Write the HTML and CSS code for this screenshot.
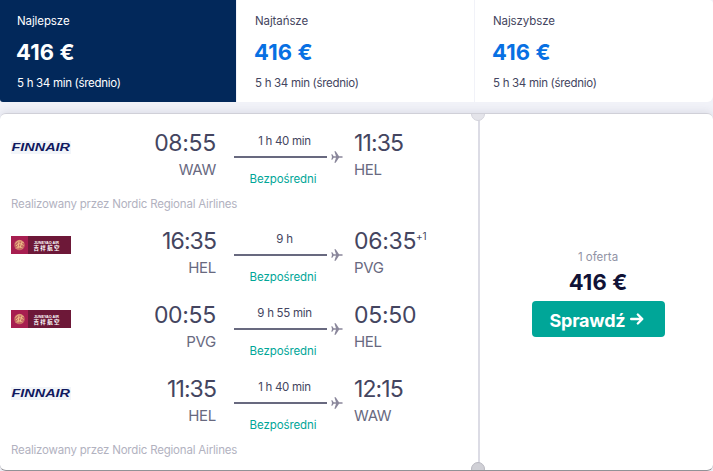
FILE: index.html
```html
<!DOCTYPE html>
<html lang="pl">
<head>
    <meta charset="UTF-8">
    <meta name="viewport" content="width=device-width, initial-scale=1.0">
    <title>Loty</title>
    <link rel="stylesheet" href="styles.css">
</head>
<body>
    <svg class="defs" width="0" height="0">
        <symbol id="plane" viewBox="0 0 12 12">
            <path d="M0.3 3.2h1L2.7 5.2H5L3.4 0.3h1.3L8 5.2h2.6c.7 0 1.2.4 1.2.8s-.5.8-1.2.8H8L4.700 11.700H3.400L5 6.800H2.700L1.300 8.800h-1L1 6z"/>
        </symbol>
        <symbol id="juneyao" viewBox="0 0 60 18">
            <rect width="60" height="18" fill="#6d1838"/>
            <rect width="17" height="18" fill="#a71e50"/>
            <circle cx="8.5" cy="9" r="5.3" fill="#c66a62"/>
            <path d="M4.500 7.500c2-3.500 6-3.500 8-.5M5 10c2-3 5-3 7.500-.5M5 12.500c2-2.500 4-2 6.500-.5M8 5.500l-1 7M11 6l-2 6" fill="none" stroke="#efc088" stroke-width="1"/>
        </symbol>
    </svg>

    <div class="tabs">
        <div class="tab active">
            <div class="tab-title">Najlepsze</div>
            <div class="tab-price">416 €</div>
            <div class="tab-time">5 h 34 min (średnio)</div>
        </div>
        <div class="tab">
            <div class="tab-title">Najtańsze</div>
            <div class="tab-price">416 €</div>
            <div class="tab-time">5 h 34 min (średnio)</div>
        </div>
        <div class="tab">
            <div class="tab-title">Najszybsze</div>
            <div class="tab-price">416 €</div>
            <div class="tab-time">5 h 34 min (średnio)</div>
        </div>
    </div>

    <div class="ticket">
        <div class="legs">
            <div class="leg">
                <svg class="logo finnair" viewBox="0 0 60 13">
                    <text class="finnair-name" x="0.500" y="10.300" textLength="58.500" lengthAdjust="spacingAndGlyphs">FINNAIR</text>
                </svg>
                <div class="depart">
                    <div class="time">08:55</div>
                    <div class="code">WAW</div>
                </div>
                <div class="stops">
                    <div class="duration">1 h 40 min</div>
                    <div class="route"><span class="line"></span><svg class="plane"><use href="#plane"/></svg></div>
                    <div class="direct">Bezpośredni</div>
                </div>
                <div class="arrive">
                    <div class="time narrow">11:35</div>
                    <div class="code">HEL</div>
                </div>
            </div>
            <div class="operator">Realizowany przez Nordic Regional Airlines</div>

            <div class="leg">
                <svg class="logo" viewBox="0 0 60 18">
                    <use href="#juneyao"/>
                    <text class="juneyao-en" x="23" y="7.800" textLength="25" lengthAdjust="spacingAndGlyphs">JUNEYAO AIR</text>
                    <text class="juneyao-cn" x="22.500" y="14" textLength="26" lengthAdjust="spacing">吉祥航空</text>
                </svg>
                <div class="depart">
                    <div class="time narrow">16:35</div>
                    <div class="code">HEL</div>
                </div>
                <div class="stops">
                    <div class="duration">9 h</div>
                    <div class="route"><span class="line"></span><svg class="plane"><use href="#plane"/></svg></div>
                    <div class="direct">Bezpośredni</div>
                </div>
                <div class="arrive">
                    <div class="time">06:35<span class="next-day">+1</span></div>
                    <div class="code">PVG</div>
                </div>
            </div>

            <div class="leg">
                <svg class="logo" viewBox="0 0 60 18">
                    <use href="#juneyao"/>
                    <text class="juneyao-en" x="23" y="7.800" textLength="25" lengthAdjust="spacingAndGlyphs">JUNEYAO AIR</text>
                    <text class="juneyao-cn" x="22.500" y="14" textLength="26" lengthAdjust="spacing">吉祥航空</text>
                </svg>
                <div class="depart">
                    <div class="time">00:55</div>
                    <div class="code">PVG</div>
                </div>
                <div class="stops">
                    <div class="duration">9 h 55 min</div>
                    <div class="route"><span class="line"></span><svg class="plane"><use href="#plane"/></svg></div>
                    <div class="direct">Bezpośredni</div>
                </div>
                <div class="arrive">
                    <div class="time">05:50</div>
                    <div class="code">HEL</div>
                </div>
            </div>

            <div class="leg">
                <svg class="logo finnair" viewBox="0 0 60 13">
                    <text class="finnair-name" x="0.500" y="10.300" textLength="58.500" lengthAdjust="spacingAndGlyphs">FINNAIR</text>
                </svg>
                <div class="depart">
                    <div class="time narrow">11:35</div>
                    <div class="code">HEL</div>
                </div>
                <div class="stops">
                    <div class="duration">1 h 40 min</div>
                    <div class="route"><span class="line"></span><svg class="plane"><use href="#plane"/></svg></div>
                    <div class="direct">Bezpośredni</div>
                </div>
                <div class="arrive">
                    <div class="time narrow">12:15</div>
                    <div class="code">WAW</div>
                </div>
            </div>
            <div class="operator">Realizowany przez Nordic Regional Airlines</div>
        </div>

        <div class="offer">
            <div class="offer-count">1 oferta</div>
            <div class="offer-price">416 €</div>
            <button class="button">Sprawdź
                <svg class="arrow" viewBox="0 0 14 14"><path d="M1.200 7H12M7.800 2.500L12.300 7l-4.500 4.500"/></svg>
            </button>
        </div>
    </div>
</body>
</html>
```

FILE: styles.css
```css
* {
    box-sizing: border-box;
    margin: 0;
    padding: 0;
}

body {
    width: 713px;
    height: 471px;
    overflow: hidden;
    background-color: #f1f2f8;
    font-family: Inter, "Liberation Sans", sans-serif;
    font-size: 12px;
    color: #444560;
}

.defs {
    display: block;
}

.tabs {
    display: grid;
    grid-template-columns: 236px 237px 238px;
    gap: 1px;
    height: 102px;
}

.tab {
    background-color: white;
    padding: 13px 18px 0;
    letter-spacing: -0.3px;
}

.tab.active {
    background-color: #02285a;
    color: white;
    padding-left: 17px;
    border-radius: 0 0 0 3px;
}

.tab:last-child {
    border-radius: 0 4px 6px 0;
}

.tab-title,
.tab-time {
    font-size: 11.5px;
    line-height: 16px;
}

.tab-title {
    letter-spacing: -0.1px;
}

.tab-price {
    font-size: 22px;
    font-weight: 700;
    line-height: 28px;
    letter-spacing: 0.1px;
    margin: 9px 0 9px -1px;
    color: #0770e3;
}

.tab.active .tab-price {
    color: white;
}

.ticket {
    display: flex;
    height: 358px;
    margin-top: 11px;
    background-color: white;
    border-top: 1px solid #d0d0d8;
    border-bottom: 1px solid #929297;
    border-radius: 6px;
    box-shadow: 0 -1px 8px rgba(60, 60, 90, 0.12);
    overflow: hidden;
}

.legs {
    position: relative;
    width: 480px;
    padding: 15px 0 0 11px;
    border-right: 2px solid #dcdce5;
}

/* ticket notches */
.legs::before,
.legs::after {
    content: "";
    position: absolute;
    right: -7px;
    width: 12px;
    height: 12px;
    border-radius: 50%;
    background-color: #e4e4ea;
    border: 1px solid #d3d3db;
}

.legs::before {
    top: -7px;
}

.legs::after {
    bottom: -6px;
    background-color: #d0d0d6;
    border-color: #b9b9c1;
}

.leg {
    display: grid;
    grid-template-columns: 60px 145px 110px 100px;
    height: 74px;
}

.logo {
    width: 60px;
    height: 18px;
    margin-top: 9px;
}

.logo.finnair {
    height: 13px;
    margin-top: 12px;
    background-color: #f2f5f9;
}

.finnair-name {
    font-family: "Liberation Sans", sans-serif;
    font-size: 10px;
    font-style: italic;
    font-weight: bold;
    fill: #10195f;
}

.juneyao-en {
    font-family: "Liberation Sans", sans-serif;
    font-size: 4px;
    font-weight: bold;
    fill: white;
}

.juneyao-cn {
    font-family: "Noto Sans CJK SC", sans-serif;
    font-size: 5.5px;
    font-weight: bold;
    fill: white;
}

.depart {
    text-align: right;
}

.time {
    font-size: 23px;
    line-height: 29px;
    letter-spacing: -0.3px;
}

.time.narrow {
    letter-spacing: -0.9px;
}

.code {
    font-size: 15px;
    line-height: 24px;
    letter-spacing: -0.3px;
    color: #68697f;
}

.stops {
    width: 98px;
    margin-left: 18px;
    padding-top: 4px;
    text-align: center;
}

.duration,
.direct {
    font-size: 11.5px;
    line-height: 16px;
    letter-spacing: -0.1px;
}

.duration {
    padding-left: 3px;
    letter-spacing: -0.3px;
}

.route {
    display: flex;
    align-items: center;
    gap: 4px;
    width: 109px;
    height: 12px;
    margin: 2px 0 8px;
}

.line {
    width: 93px;
    height: 2px;
    background-color: #68697f;
}

.plane {
    width: 12px;
    height: 12px;
    fill: #8a879b;
}

.direct {
    color: #00a698;
}

.arrive {
    padding-left: 28px;
    white-space: nowrap;
}

.next-day {
    font-size: 10px;
    vertical-align: 9px;
    line-height: 1;
}

.operator {
    height: 24px;
    margin-top: -7px;
    margin-bottom: 7px;
    font-size: 11.5px;
    line-height: 16px;
    letter-spacing: -0.2px;
    color: #b2b2bf;
}

.offer {
    display: flex;
    flex: 1;
    flex-direction: column;
    align-items: center;
    padding-top: 135px;
    padding-left: 3px;
}

.offer-count {
    font-size: 11.5px;
    line-height: 16px;
    color: #9193a5;
}

.offer-price {
    font-size: 22px;
    font-weight: 700;
    line-height: 30px;
    letter-spacing: 0.1px;
    color: #111236;
    margin: 2px 0 4px;
}

.button {
    display: flex;
    align-items: center;
    justify-content: center;
    gap: 5px;
    width: 133px;
    height: 36px;
    padding: 2px 2px 0 0;
    border: none;
    border-radius: 4px;
    background-color: #00a698;
    color: white;
    font-family: inherit;
    font-size: 18px;
    font-weight: 700;
    letter-spacing: -0.2px;
    cursor: pointer;
}

.arrow {
    width: 14px;
    height: 14px;
    margin-top: -2px;
    fill: none;
    stroke: white;
    stroke-width: 2.4;
    stroke-linecap: round;
    stroke-linejoin: round;
}
```
